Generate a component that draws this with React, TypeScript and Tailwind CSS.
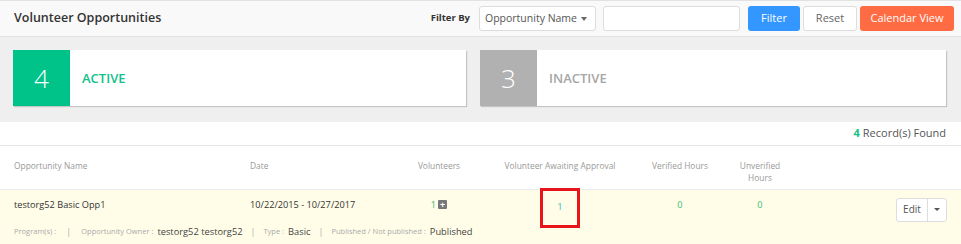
const font = { fontFamily: '"Open Sans", "Noto Sans", sans-serif' };

function StatusCard({
  count,
  label,
  active,
  className,
}: {
  count: number;
  label: string;
  active?: boolean;
  className?: string;
}) {
  return (
    <div className={`flex h-[56px] bg-white shadow-[1px_1px_1px_rgba(0,0,0,0.18)] ${className ?? ""}`}>
      <div
        className={`flex w-[57px] items-center justify-center text-[26px] font-light text-white ${
          active ? "bg-[#00c389]" : "bg-[#b1b1b1]"
        }`}
      >
        {count}
      </div>
      <div
        className={`flex items-center pl-[12px] pt-[2px] text-[13px] font-semibold ${
          active ? "text-[#12c08a]" : "text-[#a6a6a6]"
        }`}
      >
        {label}
      </div>
    </div>
  );
}

export default function App() {
  return (
    <div className="h-[244px] w-[961px] overflow-hidden bg-white text-[#333]" style={font}>
      {/* header bar */}
      <div className="flex h-[37px] items-center border-t border-b border-[#e2e2e2] bg-[#f9f9f9] pl-[14px] pr-[7px]">
        <h1 className="text-[12.5px] font-semibold text-[#333]">Volunteer Opportunities</h1>
        <div className="ml-auto flex items-center">
          <span className="mr-[9px] text-[9.5px] font-bold text-[#333]">Filter By</span>
          <div className="flex h-[25px] w-[117px] items-center justify-between rounded-[3px] border border-[#ddd] bg-white pl-[5px] pr-[8px] text-[10.5px] text-[#555]">
            <span>Opportunity Name</span>
            <span className="border-x-[3px] border-t-[4px] border-x-transparent border-t-[#666]" />
          </div>
          <div className="ml-[7px] h-[25px] w-[137px] rounded-[3px] border border-[#ddd] bg-white" />
          <button className="ml-[8px] h-[25px] w-[52px] rounded-[3px] bg-[#3497ff] text-[11px] text-white">
            Filter
          </button>
          <button className="ml-[3px] h-[25px] w-[54px] rounded-[3px] border border-[#ddd] bg-white text-[11px] text-[#666]">
            Reset
          </button>
          <button className="ml-[3px] h-[25px] w-[94px] rounded-[3px] bg-[#ff6b42] text-[11px] text-white">
            Calendar View
          </button>
        </div>
      </div>

      {/* status cards */}
      <div className="flex h-[85px] gap-[14px] bg-[#efefef] pl-[13px] pr-[15px] pt-[13px]">
        <StatusCard count={4} label="ACTIVE" active className="w-[453px]" />
        <StatusCard count={3} label="INACTIVE" className="flex-1" />
      </div>

      {/* records found */}
      <div className="flex h-[24px] items-center justify-end border-b border-[#e6e6e6] pr-[15px] text-[11px] text-[#555]">
        <span className="mr-[3px] font-bold text-[#12c08a]">4</span>
        Record(s) Found
      </div>

      {/* table head */}
      <div className="flex h-[44px] items-start border-b border-[#ececec] pt-[14px] text-[8.4px] text-[#999]">
        <div className="w-[250px] pl-[14px]">Opportunity Name</div>
        <div className="w-[155px]">Date</div>
        <div className="w-[68px] text-center">Volunteers</div>
        <div className="w-[174px] text-center">Volunteer Awaiting Approval</div>
        <div className="w-[66px] text-center">Verified Hours</div>
        <div className="w-[94px]">
          <div className="mx-auto w-[50px] text-center leading-[12px]">Unverified Hours</div>
        </div>
      </div>

      {/* table row */}
      <div className="h-[60px] bg-[#fffde8]">
        <div className="flex h-[30px] items-center text-[9.2px]">
          <div className="w-[250px] pl-[14px] text-[#333]">testorg52 Basic Opp1</div>
          <div className="w-[155px] text-[#333]">10/22/2015 - 10/27/2017</div>
          <div className="flex w-[68px] items-center justify-center gap-[2px]">
            <span className="text-[#3cb371]">1</span>
            <span className="flex h-[9px] w-[9px] items-center justify-center rounded-[1px] bg-[#777] text-[9px] font-bold leading-none text-white">
              +
            </span>
          </div>
          <div className="flex w-[174px] justify-center">
            <div className="flex h-[40px] w-[40px] translate-y-[3px] items-start justify-center border-[3px] border-[#e8141c] pt-[9px] text-[#2ec4a8]">
              1
            </div>
          </div>
          <div className="w-[66px] text-center text-[#3cc47a]">0</div>
          <div className="w-[94px] text-center text-[#3cc47a]">0</div>
          <div className="ml-auto mr-[14px] mt-[9px] flex h-[24px] rounded-[3px] border border-[#ddd] bg-white">
            <span className="flex w-[31px] items-center justify-center border-r border-[#ddd] text-[10px] text-[#555]">
              Edit
            </span>
            <span className="flex w-[18px] items-center justify-center">
              <span className="border-x-[3px] border-t-[3px] border-x-transparent border-t-[#555]" />
            </span>
          </div>
        </div>
        <div className="flex h-[23px] items-center pl-[14px] text-[7.5px] text-[#aaa]">
          <span>Program(s) :</span>
          <span className="mx-[10px] text-[9px]">|</span>
          <span>Opportunity Owner :</span>
          <span className="ml-[4px] text-[9.3px] text-[#444]">testorg52 testorg52</span>
          <span className="mx-[8px] text-[9px]">|</span>
          <span>Type :</span>
          <span className="ml-[4px] text-[9.3px] text-[#444]">Basic</span>
          <span className="mx-[8px] text-[9px]">|</span>
          <span>Published / Not published :</span>
          <span className="ml-[4px] text-[9.3px] text-[#444]">Published</span>
        </div>
      </div>
    </div>
  );
}
